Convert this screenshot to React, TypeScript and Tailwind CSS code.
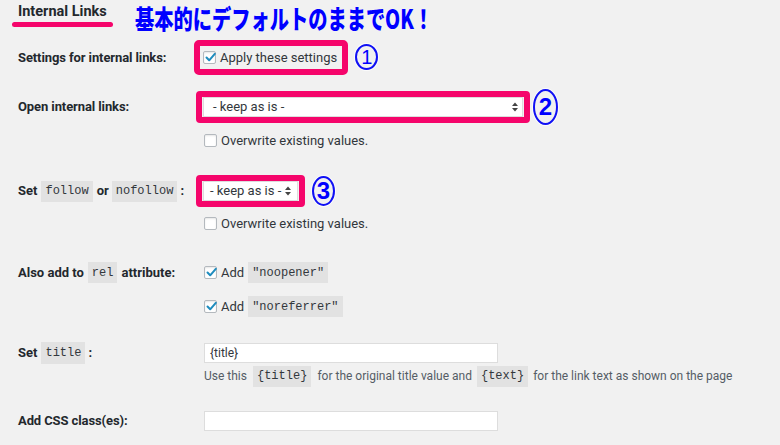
import React from "react";

const PINK = "border-[#f5056b]";

function Check({ checked }: { checked?: boolean }) {
  return (
    <span className="relative inline-flex w-[13px] h-[13px] shrink-0 border border-[#b4b9be] bg-white rounded-[2px] shadow-[inset_0_1px_2px_rgba(0,0,0,0.1)]">
      {checked && (
        <svg viewBox="0 0 13 13" className="absolute left-[0px] top-[-1px] w-[13px] h-[13px]">
          <path d="M2.5 6.5 L5.2 9.3 L10.8 2.8" fill="none" stroke="#1e8cbe" strokeWidth="2" strokeLinecap="round" strokeLinejoin="round" />
        </svg>
      )}
    </span>
  );
}

function Code({ children, cls = "" }: { children: React.ReactNode; cls?: string }) {
  return (
    <span
      className={`inline-flex items-center h-[21px] px-[4px] bg-[#e2e2e2] text-[#32373c] text-[12px] font-normal ${cls}`}
      style={{ fontFamily: '"Liberation Mono", "DejaVu Sans Mono", monospace' }}
    >
      {children}
    </span>
  );
}

function Arrows() {
  return (
    <svg viewBox="0 0 6 10" className="w-[6px] h-[10px] shrink-0">
      <path d="M0 4 L3 0.5 L6 4 Z" fill="#444" />
      <path d="M0 6 L3 9.5 L6 6 Z" fill="#444" />
    </svg>
  );
}

function Label({ children }: { children: React.ReactNode }) {
  return (
    <div className="w-[204px] shrink-0 pl-[18px] flex items-center text-[13px] font-bold text-[#23282d] tracking-[-0.1px] whitespace-nowrap">
      {children}
    </div>
  );
}

function Circled({ n, w, h, thin }: { n: string; w: string; h: string; thin?: boolean }) {
  return (
    <span
      className={`inline-flex items-center justify-center ${w} ${h} rounded-[50%] border-[2px] border-[#1010f5] text-[#0000ff] shadow-[0_0_0_1px_rgba(255,255,255,0.8)] ${
        thin ? "font-normal text-[20px]" : "font-black text-[24px]"
      }`}
      style={{ fontFamily: '"Liberation Sans", Arial, sans-serif' }}
    >
      {n}
    </span>
  );
}

export default function App() {
  return (
    <div
      className="w-[780px] h-[445px] overflow-hidden bg-[#f1f1f1] text-[#23282d]"
      style={{ fontFamily: 'Roboto, "Liberation Sans", Arial, sans-serif' }}
    >
      {/* header */}
      <div className="h-[40px] flex items-start">
        <div className="pl-[12px] pt-[4px] flex flex-col">
          <span className="pl-[6px] text-[14.5px] font-bold leading-[16px] text-[#23282d] whitespace-nowrap">Internal Links</span>
          <span className="mt-[2px] w-[101px] h-[5px] rounded-full bg-[#f5056b]" />
        </div>
        <div
          className="ml-[22px] mt-[4px] text-[26px] leading-[28px] font-black text-[#0000ff] origin-left [transform:scaleX(0.74)] whitespace-nowrap [text-shadow:0_0_1px_#ffffff]"
          style={{ fontFamily: '"Noto Sans CJK JP", "Noto Sans", sans-serif' }}
        >
          基本的にデフォルトのままでOK！
        </div>
      </div>

      {/* row 1 */}
      <div className="flex h-[35px] items-center">
        <Label>Settings for internal links:</Label>
        <div className={`-ml-[10px] h-[35px] border-[6px] ${PINK} rounded-[5px] flex items-center pl-[3px] pr-[5px] gap-[4px] whitespace-nowrap`}>
          <Check checked />
          <span className="text-[13px] text-[#32373c]">Apply these settings</span>
        </div>
        <span className="ml-[7px]">
          <Circled n="1" w="w-[23px]" h="h-[26px]" thin />
        </span>
      </div>

      {/* row 2 */}
      <div className="mt-[16px] flex h-[32px] items-center">
        <Label>Open internal links:</Label>
        <div className={`-ml-[8px] w-[334px] h-[32px] border-[6px] ${PINK} rounded-[4px] flex items-center pl-[1px] pr-[1px]`}>
          <div className="w-full h-[20px] bg-white border border-[#dddddd] flex items-center justify-between pl-[9px] pr-[4px] text-[13px] text-[#32373c]">
            <span>- keep as is -</span>
            <Arrows />
          </div>
        </div>
        <span className="ml-[3px]">
          <Circled n="2" w="w-[25px]" h="h-[36px]" />
        </span>
      </div>

      <div className="mt-[11px] h-[13px] flex items-center pl-[204px] gap-[4px]">
        <Check />
        <span className="text-[13px] text-[#32373c]">Overwrite existing values.</span>
      </div>

      {/* row 3 */}
      <div className="mt-[28px] flex h-[32px] items-center">
        <div className="w-[204px] shrink-0 pl-[18px] flex items-center text-[13px] font-bold text-[#23282d] whitespace-nowrap">
          <span>Set</span>
          <Code cls="ml-[4px] h-[20px]">follow</Code>
          <span className="ml-[4px]">or</span>
          <Code cls="ml-[3px] h-[20px]">nofollow</Code>
          <span className="ml-[3px]">:</span>
        </div>
        <div className={`-ml-[8px] w-[109px] h-[32px] border-[6px] ${PINK} rounded-[4px] flex items-center pl-[1px] pr-[1px]`}>
          <div className="w-full h-[20px] bg-white border border-[#dddddd] flex items-center gap-[4px] pl-[6px] text-[13px] text-[#32373c] whitespace-nowrap">
            <span>- keep as is -</span>
            <Arrows />
          </div>
        </div>
        <span className="ml-[7px]">
          <Circled n="3" w="w-[23px]" h="h-[30px]" />
        </span>
      </div>

      <div className="mt-[10px] h-[13px] flex items-center pl-[204px] gap-[4px]">
        <Check />
        <span className="text-[13px] text-[#32373c]">Overwrite existing values.</span>
      </div>

      {/* row 4 */}
      <div className="mt-[32px] flex h-[21px] items-center">
        <div className="w-[204px] shrink-0 pl-[18px] flex items-center text-[13px] font-bold text-[#23282d] whitespace-nowrap">
          <span>Also add to</span>
          <Code cls="ml-[4px]">rel</Code>
          <span className="ml-[4px]">attribute:</span>
        </div>
        <div className="flex items-center gap-[4px]">
          <Check checked />
          <span className="text-[13px] text-[#32373c]">Add</span>
          <Code>"noopener"</Code>
        </div>
      </div>

      <div className="mt-[13px] flex h-[21px] items-center pl-[204px] gap-[4px]">
        <Check checked />
        <span className="text-[13px] text-[#32373c]">Add</span>
        <Code>"noreferrer"</Code>
      </div>

      {/* title */}
      <div className="mt-[26px] flex h-[20px] items-center">
        <div className="w-[204px] shrink-0 pl-[18px] flex items-center text-[13px] font-bold text-[#23282d] whitespace-nowrap">
          <span>Set</span>
          <Code cls="ml-[4px] h-[22px]">title</Code>
          <span className="ml-[3px]">:</span>
        </div>
        <div className="w-[294px] h-[20px] bg-white border border-[#dddddd] flex items-center pl-[5px] text-[12px] text-[#32373c]">
          {"{title}"}
        </div>
      </div>

      <div className="mt-[5px] h-[16px] flex items-center pl-[204px] text-[12px] text-[#555d66] whitespace-nowrap">
        <span>Use this</span>
        <Code cls="ml-[6px] h-[18px] text-[#555d66]">{"{title}"}</Code>
        <span className="ml-[6px]">for the original title value and</span>
        <Code cls="ml-[5px] h-[18px] text-[#555d66]">{"{text}"}</Code>
        <span className="ml-[5px]">for the link text as shown on the page</span>
      </div>

      {/* css */}
      <div className="mt-[27px] flex h-[20px] items-center">
        <Label>Add CSS class(es):</Label>
        <div className="w-[294px] h-[20px] bg-white border border-[#dddddd]" />
      </div>
    </div>
  );
}
